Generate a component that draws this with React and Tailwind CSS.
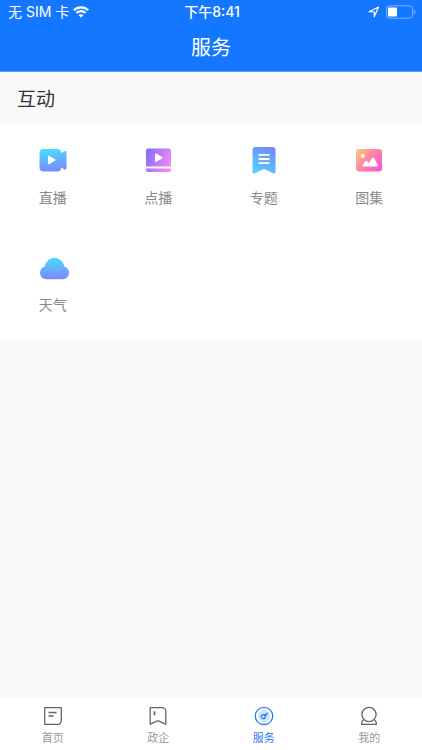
import { useState } from 'react';

const LiveIcon = (props) => (
  <svg viewBox="0 0 32 32" fill="none" {...props}>
    <defs>
      <linearGradient id="live" x1="0.4" y1="0" x2="0.6" y2="1">
        <stop stopColor="#4bdcfb" />
        <stop offset="1" stopColor="#7d86ff" />
      </linearGradient>
    </defs>
    <path
      fill="url(#live)"
      d="M6.500 5h14a3.500 3.500 0 0 1 3.500 3.500l.5.600 2-1.600c1.300-1 3-.6 3 .9v15.700c0 1.500-1.700 1.900-3 .9l-2-1.600-.5.600a3.500 3.500 0 0 1-3.500 3.500h-14A4 4 0 0 1 2.500 23.500v-14.500A4 4 0 0 1 6.500 5z"
    />
    <path fill="#fff" d="M11 12.800c0-.9.8-1.300 1.500-.9l5.400 3.300c.7.4.7 1.200 0 1.600l-5.400 3.200c-.7.4-1.500 0-1.500-.9z" />
  </svg>
);

const VodIcon = (props) => (
  <svg viewBox="0 0 32 32" fill="none" {...props}>
    <defs>
      <linearGradient id="vod" x1="0" y1="0.3" x2="1" y2="0.7">
        <stop stopColor="#8e6cfb" />
        <stop offset="1" stopColor="#f08bf8" />
      </linearGradient>
    </defs>
    <path fill="url(#vod)" d="M6 4.500h21a2 2 0 0 1 2 2V22.500H4V6.500a2 2 0 0 1 2-2zM4 24.500h25v1.500a2 2 0 0 1-2 2H6a2 2 0 0 1-2-2z" />
    <path fill="#fff" d="M13 10.500c0-.9.8-1.300 1.500-.9l5.400 3.300c.7.4.7 1.200 0 1.600l-5.400 3.300c-.7.4-1.500 0-1.500-.9z" />
  </svg>
);

const TopicIcon = (props) => (
  <svg viewBox="0 0 32 32" fill="none" {...props}>
    <defs>
      <linearGradient id="topic" x1="0.8" y1="0" x2="0.3" y2="1">
        <stop stopColor="#7487fd" />
        <stop offset="1" stopColor="#55cdfc" />
      </linearGradient>
    </defs>
    <path
      fill="url(#topic)"
      d="M7.500 3h17a3 3 0 0 1 3 3v22c0 1.300-1.200 1.900-2.300 1.200L16 25l-9.200 4.200C5.700 29.900 4.500 29.300 4.500 28V6a3 3 0 0 1 3-3z"
    />
    <path stroke="#fff" strokeWidth="1.800" d="M10.500 10.800h11M10.500 15h11M10.500 19.200h11" />
  </svg>
);

const GalleryIcon = (props) => (
  <svg viewBox="0 0 32 32" fill="none" {...props}>
    <defs>
      <linearGradient id="gallery" x1="0" y1="0.1" x2="1" y2="0.8">
        <stop stopColor="#ffc27e" />
        <stop offset="0.5" stopColor="#fd82a8" />
        <stop offset="1" stopColor="#f95bd2" />
      </linearGradient>
    </defs>
    <rect x="3" y="5" width="26" height="22.500" rx="3" fill="url(#gallery)" />
    <circle cx="9.800" cy="12" r="2" fill="#fff" />
    <path fill="#fff" d="M10.500 22.500c-.9 0-1.300-.9-.8-1.600l2.600-3.600c.4-.6 1.100-.6 1.600-.1l1.900 1.900 3.300-5c.5-.7 1.400-.7 1.900.1l3.800 6.600c.4.8 0 1.700-.9 1.700z" />
  </svg>
);

const WeatherIcon = (props) => (
  <svg viewBox="0 0 32 32" fill="none" {...props}>
    <defs>
      <linearGradient id="weather" x1="0" y1="0" x2="0" y2="1">
        <stop stopColor="#43dffb" />
        <stop offset="1" stopColor="#8283ff" />
      </linearGradient>
    </defs>
    <path
      fill="url(#weather)"
      d="M9.500 28.200C5.800 28.200 3 25.300 3 21.700c0-3.100 1.900-5.500 4.700-6.300C8.900 10.300 12.800 6.800 17.500 6.800s8.600 3.500 9.800 8.600c2.800.8 4.700 3.200 4.700 6.300 0 3.600-2.800 6.500-6.500 6.500z"
    />
  </svg>
);

const HomeIcon = (props) => (
  <svg viewBox="0 0 20 20" fill="none" stroke="currentColor" {...props}>
    <path strokeWidth="1.300" d="M1.700 1.700h16.600v13.100a3.500 3.500 0 0 1-3.500 3.500H1.700z" strokeLinejoin="round" />
    <path strokeWidth="1.300" d="M5.500 6.500h8M5.500 10h5" />
  </svg>
);

const GovIcon = (props) => (
  <svg viewBox="0 0 20 20" fill="none" stroke="currentColor" {...props}>
    <path strokeWidth="1.300" d="M2.200 1.700h12.100a3.500 3.500 0 0 1 3.500 3.500v13l-7.800-3.500-7.800 3.500z" />
    <path strokeWidth="1.800" d="M6.500 5.300v4" />
  </svg>
);

const ServiceIcon = (props) => (
  <svg viewBox="0 0 20 20" fill="none" stroke="currentColor" {...props}>
    <circle cx="10" cy="10" r="8.700" strokeWidth="1.300" />
    <circle cx="10" cy="10" r="6" fill="#cfe1fd" stroke="none" />
    <circle cx="9.300" cy="10.700" r="2" strokeWidth="1.200" />
    <path fill="currentColor" strokeWidth="0.6" d="M10 9l3.700-2.300-2.200 4z" />
  </svg>
);

const MineIcon = (props) => (
  <svg viewBox="0 0 20 20" fill="none" stroke="currentColor" {...props}>
    <circle cx="10" cy="8.500" r="7.100" strokeWidth="1.300" />
    <path strokeWidth="1.300" strokeLinejoin="round" d="M4.600 13.700c-1.500.8-2 2.100-2 4.600h14.800c0-2.500-.5-3.800-2-4.600" />
  </svg>
);

const WifiIcon = (props) => (
  <svg viewBox="0 0 16 12" fill="none" stroke="currentColor" {...props}>
    <path strokeWidth="2.200" d="M.8 4.300c4-3.900 10.400-3.900 14.400 0M3.400 7c2.600-2.500 6.600-2.500 9.200 0" />
    <path fill="currentColor" stroke="none" d="M5.500 9.100c1.400-1.300 3.600-1.300 5 0L8 11.700z" />
  </svg>
);

const LocationIcon = (props) => (
  <svg viewBox="0 0 12 12" fill="none" stroke="currentColor" {...props}>
    <path strokeWidth="1.200" strokeLinejoin="round" d="M1 5.700L10.500 1 6.300 10.700V6z" />
  </svg>
);

const BatteryIcon = (props) => (
  <svg viewBox="0 0 30 14" fill="none" {...props}>
    <rect x="0.500" y="0.800" width="26" height="12.400" rx="3" stroke="#fff" strokeOpacity="0.45" />
    <rect x="2" y="2.500" width="9" height="9" rx="1" fill="#fff" />
    <path d="M28 5v4c.9-.4 1.400-1.100 1.400-2S28.900 5.400 28 5z" fill="#fff" fillOpacity="0.5" />
  </svg>
);

const services = [
  { name: '直播', Icon: LiveIcon },
  { name: '点播', Icon: VodIcon },
  { name: '专题', Icon: TopicIcon },
  { name: '图集', Icon: GalleryIcon },
  { name: '天气', Icon: WeatherIcon },
];

const tabs = [
  { name: '首页', Icon: HomeIcon },
  { name: '政企', Icon: GovIcon },
  { name: '服务', Icon: ServiceIcon },
  { name: '我的', Icon: MineIcon },
];

export default function App() {
  const [activeTab, setActiveTab] = useState('服务');

  return (
    <div className="flex min-h-screen flex-col bg-[#f9f9f9] font-['Liberation_Sans','Noto_Sans_CJK_SC',sans-serif]">
      <header className="border-b border-[#5a9ffc] bg-[#1477ff] text-white">
        {/* Status bar */}
        <div className="grid h-6 grid-cols-3 items-center pl-2 pr-1.5 text-sm leading-6 font-['Inter','Noto_Sans_CJK_SC',sans-serif]">
          <div className="flex items-center gap-1">
            <span>无 SIM 卡</span>
            <WifiIcon className="h-3 w-4" />
          </div>
          <span className="text-center font-medium">下午8:41</span>
          <div className="flex items-center justify-end gap-1.5">
            <LocationIcon className="h-3 w-3" />
            <BatteryIcon className="h-3.5 w-[30px]" />
          </div>
        </div>
        <h1 className="pt-0.5 text-center text-xl leading-[45px] font-normal">服务</h1>
      </header>

      <main className="flex-1">
        <h2 className="px-[17px] pt-0.5 text-[19px] leading-[51px] font-normal text-[#333]">互动</h2>
        <div className="grid grid-cols-4 bg-white">
          {services.map(({ name, Icon }) => (
            <button key={name} type="button" className="flex h-[107px] flex-col items-center gap-3 pt-[19px]">
              <Icon className="h-8 w-8" />
              <span className="text-sm text-[#888]">{name}</span>
            </button>
          ))}
        </div>
      </main>

      <nav className="grid grid-cols-4 bg-white">
        {tabs.map(({ name, Icon }) => (
          <button
            key={name}
            type="button"
            onClick={() => setActiveTab(name)}
            className={`flex flex-col items-center gap-[3px] pt-2 pb-[3px] ${activeTab === name ? 'text-[#2b7bf0]' : 'text-[#666]'}`}
          >
            <Icon className="h-5 w-5" />
            <span className={`text-[11px] leading-[18px] ${activeTab === name ? '' : 'text-[#999]'}`}>{name}</span>
          </button>
        ))}
      </nav>
    </div>
  );
}
